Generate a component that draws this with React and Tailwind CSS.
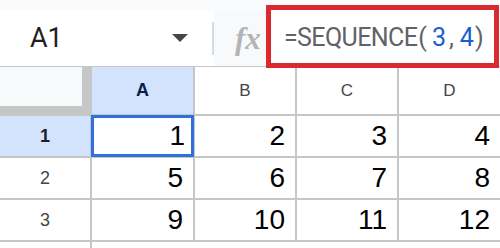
const rows = [
  [1, 2, 3, 4],
  [5, 6, 7, 8],
  [9, 10, 11, 12],
];

const cols = ['A', 'B', 'C', 'D'];

export default function App() {
  return (
    <div className="relative w-[500px] h-[248px] overflow-hidden bg-white font-['Liberation_Sans',Arial,sans-serif]">
      {/* Toolbar */}
      <div className="h-[10px] bg-[#f9fbfd]" />
      <div className="flex h-[57px] border-b border-[#c7c7c7]">
        <div className="flex w-[214px] items-center bg-white pl-[30px]">
          <span className="font-['Roboto',sans-serif] text-[27px] text-[#1f1f1f]">A1</span>
          <div className="ml-auto mr-[24px] h-0 w-0 border-x-[8px] border-t-[8px] border-x-transparent border-t-[#444746]" />
          <div className="h-[33px] w-[2px] bg-[#d2dbea]" />
        </div>
        <div className="flex w-[58px] items-center bg-[#f8f9fa] pl-[21px]">
          <span className="font-['Liberation_Serif',serif] text-[31px] font-bold italic leading-none text-[#b4b4b4]">fx</span>
        </div>
        <div className="flex flex-1 items-center bg-white pl-[12px] font-['Roboto',sans-serif] text-[25px] text-[#5f6368]">
          <span className="tracking-[-0.6px]">=SEQUENCE</span>
          <span className="ml-[1px] tracking-[5px]">(</span>
          <span className="tracking-[3px] text-[#1a5fd0]">3</span>
          <span className="tracking-[6px]">,</span>
          <span className="tracking-[1px] text-[#1a5fd0]">4</span>
          <span>)</span>
        </div>
      </div>

      {/* Grid */}
      <div className="grid grid-cols-[90px_101px_100px_100px_101px] grid-rows-[47px_40px_40px_40px] gap-[2px] bg-[#c4c7c5]">
        <div className="bg-[#c4c7c5]">
          <div className="h-[39px] w-[82px] bg-[#f8f9fa]" />
        </div>
        {cols.map((c, i) => (
          <div
            key={c}
            className={
              i === 0
                ? 'flex items-center justify-center bg-[#d3e3fd] text-[18px] font-bold text-[#0b1f4a]'
                : 'flex items-center justify-center bg-white text-[17px] text-[#444746]'
            }
          >
            {c}
          </div>
        ))}
        {rows.map((r, ri) => (
          <>
            <div
              key={'h' + ri}
              className={
                ri === 0
                  ? 'flex items-center justify-center bg-[#d3e3fd] text-[18px] font-bold text-[#1f1f1f]'
                  : 'flex items-center justify-center bg-white text-[18px] text-[#444746]'
              }
            >
              {ri + 1}
            </div>
            {r.map((v, ci) => (
              <div
                key={ri + '-' + ci}
                className={
                  ri === 0 && ci === 0
                    ? 'flex items-center justify-end bg-white pr-[8px] text-[28px] text-black outline outline-[3px] -outline-offset-[2px] outline-[#2f6fde]'
                    : 'flex items-center justify-end bg-white pr-[10px] text-[28px] text-black'
                }
              >
                {v}
              </div>
            ))}
          </>
        ))}
        <div className="h-[10px] bg-white" />
        <div className="col-span-4 h-[10px] bg-white" />
      </div>

      {/* Annotation box */}
      <div className="absolute left-[266px] top-[5px] h-[63px] w-[233px] border-[5px] border-[#db2a2f]" />
    </div>
  );
}
